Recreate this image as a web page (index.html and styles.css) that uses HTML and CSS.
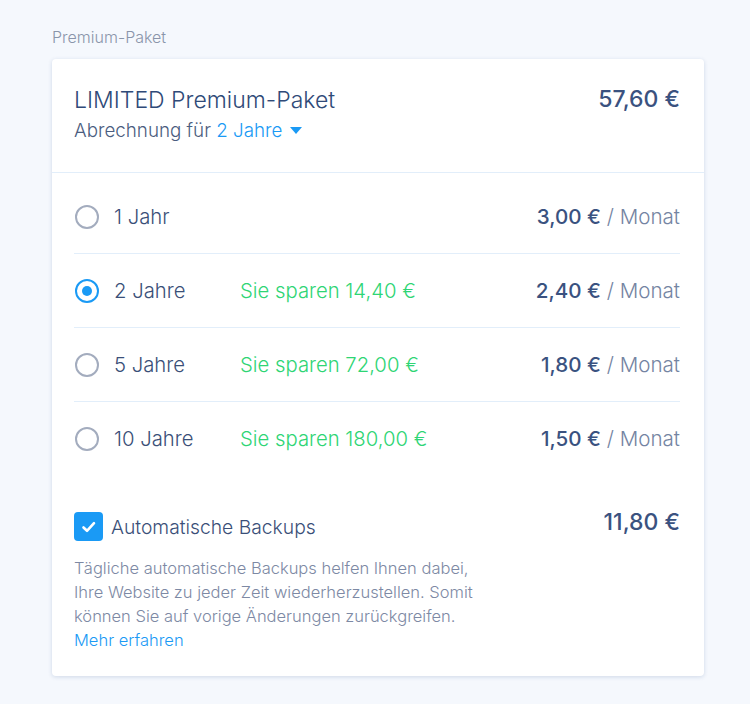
FILE: index.html
```html
<!DOCTYPE html>
<html lang="de">
<head>
    <meta charset="UTF-8">
    <title>Premium-Paket</title>
    <link rel="stylesheet" href="styles.css">
</head>
<body>

<div class="page">
    <div class="section-label">Premium-Paket</div>

    <div class="card">
        <div class="card-head">
            <div>
                <div class="plan-name">LIMITED Premium-Paket</div>
                <div class="billing">Abrechnung für <span class="period">2 Jahre <span class="caret"></span></span></div>
            </div>
            <div class="total">57,60 €</div>
        </div>

        <div class="card-body">
            <div class="term-list">
                <label class="term">
                    <span class="radio"></span>
                    <span class="term-name">1 Jahr</span>
                    <span class="saving"></span>
                    <span class="term-price"><b>3,00 €</b> / Monat</span>
                </label>
                <label class="term">
                    <span class="radio checked"></span>
                    <span class="term-name">2 Jahre</span>
                    <span class="saving">Sie sparen 14,40 €</span>
                    <span class="term-price"><b>2,40 €</b> / Monat</span>
                </label>
                <label class="term">
                    <span class="radio"></span>
                    <span class="term-name">5 Jahre</span>
                    <span class="saving">Sie sparen 72,00 €</span>
                    <span class="term-price"><b>1,80 €</b> / Monat</span>
                </label>
                <label class="term">
                    <span class="radio"></span>
                    <span class="term-name">10 Jahre</span>
                    <span class="saving">Sie sparen 180,00 €</span>
                    <span class="term-price"><b>1,50 €</b> / Monat</span>
                </label>
            </div>

            <div class="addon">
                <div class="addon-row">
                    <label class="addon-check">
                        <span class="checkbox">
                            <svg width="18" height="18" viewBox="0 0 18 18"><path d="M3.5 9.5l3.5 3.3 7-7.6" fill="none" stroke="#fff" stroke-width="2.6" stroke-linecap="round" stroke-linejoin="round"/></svg>
                        </span>
                        Automatische Backups
                    </label>
                    <div class="addon-price">11,80 €</div>
                </div>
                <p class="addon-text">Tägliche automatische Backups helfen Ihnen dabei, Ihre Website zu jeder Zeit wiederherzustellen. Somit können Sie auf vorige Änderungen zurückgreifen.<br><a href="#">Mehr erfahren</a></p>
            </div>
        </div>
    </div>
</div>

</body>
</html>
```

FILE: styles.css
```css
body {
    margin: 0;
    background-color: #f5f8fd;
    font-family: Inter, "Open Sans", sans-serif;
    font-weight: 300;
    color: #344b75;
}

.page {
    padding: 28px 46px 28px 52px;
}

.section-label {
    font-size: 16px;
    line-height: 19px;
    color: #8a95aa;
    margin-bottom: 12px;
}

.card {
    background-color: #fff;
    border-radius: 4px;
    box-shadow: 0 1px 4px rgba(40, 80, 140, 0.18);
}

.card-head {
    display: flex;
    justify-content: space-between;
    align-items: flex-start;
    padding: 27px 24px 30px 22px;
    border-bottom: 1px solid #e2eefa;
}

.plan-name {
    font-size: 23px;
    color: #2f4a78;
}

.billing {
    margin-top: 5px;
    font-size: 18.8px;
    color: #4b5d80;
}

.period {
    color: #1a9af5;
}

.caret {
    display: inline-block;
    width: 0;
    height: 0;
    margin-left: 2px;
    vertical-align: 3px;
    border-left: 6.5px solid transparent;
    border-right: 6.5px solid transparent;
    border-top: 7px solid #1a9af5;
}

.total {
    font-size: 23px;
    font-weight: 500;
    color: #3a5280;
    margin-top: -1px;
}

.card-body {
    padding: 7px 24px 24px 22px;
}

.term {
    display: flex;
    align-items: center;
    height: 73px;
    border-bottom: 1px solid #e2eefa;
    font-size: 20.3px;
}

.term:last-child {
    border-bottom: none;
}

.radio {
    width: 20px;
    height: 20px;
    border: 2px solid #a3acbe;
    border-radius: 50%;
    margin-left: 1px;
    margin-right: 15px;
    box-sizing: content-box;
    position: relative;
}

.radio.checked {
    border-color: #1a9af5;
}

.radio.checked::after {
    content: "";
    position: absolute;
    left: 5px;
    top: 5px;
    width: 10px;
    height: 10px;
    border-radius: 50%;
    background-color: #1a9af5;
}

.term-name {
    width: 126px;
    color: #3a4f78;
}

.saving {
    flex: 1;
    color: #2ed574;
}

.term-price {
    font-size: 20.6px;
    color: #7484a2;
}

.term-price b {
    font-weight: 500;
    color: #3a5280;
}

.addon {
    padding-top: 37px;
}

.addon-row {
    display: flex;
    justify-content: space-between;
    align-items: flex-start;
}

.addon-check {
    display: flex;
    align-items: center;
    font-size: 19.3px;
    color: #3a4f78;
}

.checkbox {
    width: 29px;
    height: 29px;
    border-radius: 4px;
    background-color: #1a9af5;
    margin-right: 8px;
    display: flex;
    align-items: center;
    justify-content: center;
}

.addon-price {
    font-size: 23px;
    font-weight: 500;
    color: #3a5280;
    margin-top: -4px;
}

.addon-text {
    margin: 15px 0 0 0;
    width: 410px;
    font-size: 16.5px;
    line-height: 24px;
    color: #7d89a4;
}

.addon-text a {
    color: #1a9af5;
    text-decoration: none;
}
```
